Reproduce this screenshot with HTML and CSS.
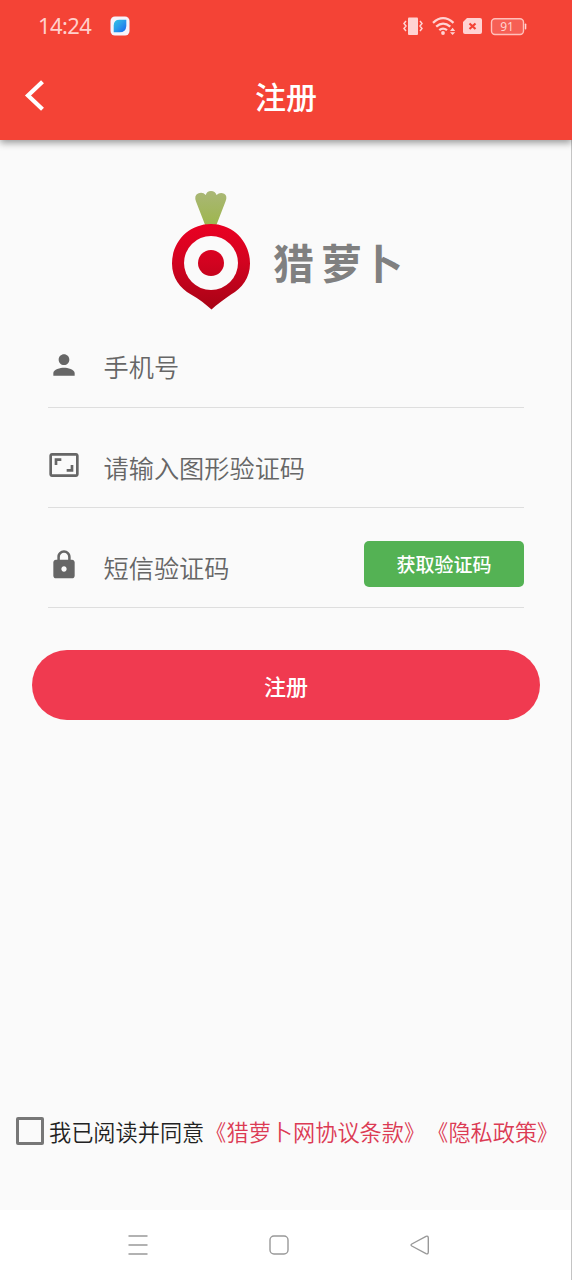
FILE: index.html
```html
<!DOCTYPE html>
<html lang="zh-CN">
<head>
<meta charset="utf-8">
<title>注册</title>
<link rel="stylesheet" href="styles.css">
</head>
<body>
<div class="screen">
  <header class="header">
    <div class="status">
      <span class="clock">14:24</span>
      <svg class="app-badge" width="20" height="20" viewBox="0 0 20 20">
        <defs><linearGradient id="leaf" x1="0" y1="0" x2="1" y2="1"><stop offset="0" stop-color="#35c3e2"/><stop offset=".45" stop-color="#2a9eea"/><stop offset="1" stop-color="#1765ef"/></linearGradient></defs>
        <rect x=".5" y=".5" width="19" height="19" rx="4.5" fill="#f6f3fb"/>
        <path d="M3.700 16.300V9.500Q3.700 3.800 9.500 3.800H16.300V10Q16 16.300 9.500 16.300Z" fill="url(#leaf)"/>
      </svg>
      <svg class="status-icons" width="126" height="22" viewBox="401 14 126 22">
        <g fill="#ffd3d3">
          <rect x="408" y="16.500" width="10" height="17.500" rx="1"/>
          <path d="M406 20l-2 2.500 2 2.500-2 2.500 2 2.500M420 20l2 2.500-2 2.500 2 2.500-2 2.500" fill="none" stroke="#ffd3d3" stroke-width="1.500"/>
          <g fill="none" stroke="#ffd3d3" stroke-width="2.300">
            <path d="M433 21.800Q443 12.500 453.500 21.800M436.200 25.700Q443 19.500 450.300 25.700M439.300 29.200Q443 26 447 29.200"/>
          </g>
          <circle cx="443" cy="32" r="1.900"/>
          <path d="M450 30l2.600-3.200 2.600 3.200zM450 31.300h5.200l-2.600 2.800z"/>
          <path d="M467 17h13q2 0 2 2v12q0 2-2 2h-15q-2 0-2-2V21z"/>
          <rect x="524.800" y="22.500" width="1.500" height="6" rx=".7"/>
        </g>
        <path d="M469.500 22.500l6 5.500m0-5.500l-6 5.500" stroke="#f44336" stroke-width="2.200"/>
        <rect x="491.500" y="17.700" width="32" height="15.800" rx="3.500" fill="#ffd3d3" fill-opacity=".2" stroke="#ffc0bb" stroke-width="1.400"/>
        <text x="507" y="30" class="battery">91</text>
      </svg>
    </div>
    <div class="appbar">
      <svg class="back" width="22" height="34" viewBox="0 0 22 34"><path d="M19.500 2.800L5 16.500l14.500 13.700" fill="none" stroke="#fff" stroke-width="4.200"/></svg>
      <h1 class="title">注册</h1>
    </div>
  </header>
  <main class="main">
    <div class="brand">
      <svg class="radish" width="80" height="120" viewBox="0 0 80 120">
        <defs>
          <linearGradient id="red" gradientUnits="userSpaceOnUse" x1="0" y1="34" x2="0" y2="120"><stop offset="0" stop-color="#ea0022"/><stop offset=".45" stop-color="#d20320"/><stop offset="1" stop-color="#a70315"/></linearGradient>
          <linearGradient id="green" gradientUnits="userSpaceOnUse" x1="0" y1="0" x2="0" y2="36"><stop offset="0" stop-color="#aab778"/><stop offset="1" stop-color="#9db64c"/></linearGradient>
        </defs>
        <path d="M34.500 36L25 11.500Q22.800 5.500 27 3.500Q31.500 1.500 34.800 5Q35.800 1 40 1Q44.200 1 45.500 5Q49 1.700 53.200 3.700Q56.800 6 54.500 11.500L45 36Z" fill="url(#green)"/>
        <path d="M40 34C18 34 1 51.500 1 73.500C1 88 9 98 20 104.500C28 109 35 114.500 40.500 119.500C46 114.500 52 110 60 104.500C71 98 79 88 79 73.500C79 51.500 62 34 40 34Z" fill="url(#red)"/>
        <circle cx="40" cy="73" r="27" fill="#fafafa"/>
        <circle cx="40" cy="73" r="13" fill="url(#red)"/>
      </svg>
      <div class="brand-name"><span>猎</span><span>萝卜</span></div>
    </div>
    <form class="form">
      <div class="field">
        <svg class="field-icon" width="32" height="32" viewBox="0 0 24 24"><path d="M12 12c2.210 0 4-1.790 4-4s-1.790-4-4-4-4 1.790-4 4 1.790 4 4 4zm0 2c-2.670 0-8 1.340-8 4v2h16v-2c0-2.660-5.330-4-8-4z"/></svg>
        <span class="label">手机号</span>
      </div>
      <div class="field">
        <svg class="field-icon" width="32" height="32" viewBox="0 0 24 24"><path d="M19 12h-2v3h-3v2h5v-5zM7 9h3V7H5v5h2V9zm14-6H3c-1.100 0-2 .9-2 2v14c0 1.100.9 2 2 2h18c1.100 0 2-.9 2-2V5c0-1.100-.9-2-2-2zm0 16.010H3V4.990h18v14.020z"/></svg>
        <span class="label">请输入图形验证码</span>
      </div>
      <div class="field">
        <svg class="field-icon" width="32" height="32" viewBox="0 0 24 24"><path d="M18 8h-1V6c0-2.760-2.240-5-5-5S7 3.240 7 6v2H6c-1.100 0-2 .9-2 2v10c0 1.100.9 2 2 2h12c1.100 0 2-.9 2-2V10c0-1.100-.9-2-2-2zm-6 9c-1.100 0-2-.9-2-2s.9-2 2-2 2 .9 2 2-.9 2-2 2zm3.100-9H8.900V6c0-1.710 1.390-3.100 3.100-3.100s3.100 1.390 3.100 3.100v2z"/></svg>
        <span class="label">短信验证码</span>
        <button type="button" class="code-button">获取验证码</button>
      </div>
    </form>
    <button type="button" class="submit">注册</button>
    <div class="agreement">
      <span class="checkbox"></span>
      <span class="agree-text">我已阅读并同意</span><span class="link"><span class="open">《</span>猎萝卜网协议条款<span class="close">》</span></span><span class="link"><span class="open">《</span>隐私政策<span class="close">》</span></span>
    </div>
  </main>
  <nav class="navbar">
    <svg width="22" height="22" viewBox="0 0 22 22"><path d="M1.500 2h19M1.500 11h19M1.500 20h19"/></svg>
    <svg width="22" height="22" viewBox="0 0 22 22"><rect x="2" y="2" width="18" height="18" rx="4"/></svg>
    <svg width="22" height="22" viewBox="0 0 22 22"><path d="M2.800 10Q1.300 11 2.800 12L17 19.700Q19.300 20.500 19.300 18V4Q19.300 1.500 17 2.300Z"/></svg>
  </nav>
</div>
</body>
</html>
```
FILE: styles.css
```css
* {
  box-sizing: border-box;
}

body {
  margin: 0;
  font-family: "Noto Sans CJK SC", sans-serif;
  text-spacing-trim: space-all;
}

svg {
  display: block;
  flex: none;
}

button {
  border: 0;
  padding: 0;
  font-family: inherit;
  font-weight: 500;
  color: #fff;
}

.screen {
  width: 572px;
  height: 1280px;
  display: flex;
  flex-direction: column;
  background: #fafafa;
  overflow: hidden;
}

.header {
  height: 140px;
  flex: none;
  background: #f44336;
  box-shadow: 0 3px 7px rgba(0, 0, 0, .38);
  z-index: 1;
}

.status {
  height: 52px;
  display: flex;
  align-items: center;
  padding: 0 45px 0 38px;
}

.clock {
  width: 72px;
  padding-bottom: 2px;
  font-family: "Noto Sans", sans-serif;
  font-size: 22px;
  letter-spacing: -.6px;
  color: #ffd0cc;
}

.status-icons {
  margin-left: auto;
}

.battery {
  font: 12px "Noto Sans", sans-serif;
  fill: #ffd3d0;
  text-anchor: middle;
}

.appbar {
  height: 88px;
  display: grid;
  grid-template-columns: 1fr auto 1fr;
  align-items: center;
  padding: 0 23px;
}

.title {
  margin: 0;
  font-size: 31px;
  line-height: 88px;
  font-weight: 500;
  color: #fff;
}

.main {
  flex: 1;
  display: flex;
  flex-direction: column;
  padding-top: 50px;
  border-right: 1px solid #c4c4c4;
}

.brand {
  height: 120px;
  display: flex;
  padding-left: 171px;
}

.brand-name {
  display: flex;
  gap: 7px;
  padding: 44px 0 0 22px;
  font-size: 41px;
  line-height: 54px;
  font-weight: 700;
  color: #808080;
}

.form {
  padding: 0 47px 0 48px;
}

.field {
  height: 100.300px;
  display: flex;
  align-items: center;
  padding-top: 16px;
  border-bottom: 1.500px solid #dedede;
}

.field:first-child {
  height: 97.500px;
  padding-top: 13px;
}

.field-icon {
  margin-left: -.5px;
  fill: #666;
}

.label {
  flex: 1;
  padding: 3px 0 0 24px;
  font-size: 25.200px;
  font-weight: 350;
  line-height: 36px;
  color: #666;
}

.code-button {
  width: 160px;
  height: 46px;
  margin-top: -2px;
  border-radius: 5px;
  background: #54b254;
  font-size: 19px;
  line-height: 46px;
}

.submit {
  width: 508px;
  height: 70px;
  flex: none;
  margin: 42px 0 0 32px;
  border-radius: 35px;
  background: #f03a50;
  font-size: 22px;
  line-height: 70px;
}

.agreement {
  display: flex;
  align-items: center;
  margin: auto 0 62px 16px;
  font-size: 22.200px;
  font-weight: 350;
  line-height: 34px;
  white-space: nowrap;
  color: #222;
}

.checkbox {
  width: 28px;
  height: 28px;
  margin: -1px 5px 0 0;
  border: 3px solid #777;
  border-radius: 2px;
}

.link {
  color: #dc3b54;
}

.open,
.close {
  display: inline-block;
  transform: scaleX(.92);
}

.open {
  transform-origin: right;
}

.close {
  transform-origin: left;
}

.navbar {
  height: 70px;
  flex: none;
  display: flex;
  gap: 119px;
  padding: 24px 0 0 127px;
  background: #fff;
  border-right: 1px solid #c4c4c4;
}

.navbar svg {
  fill: none;
  stroke: #999;
  stroke-width: 1.400;
}
```
